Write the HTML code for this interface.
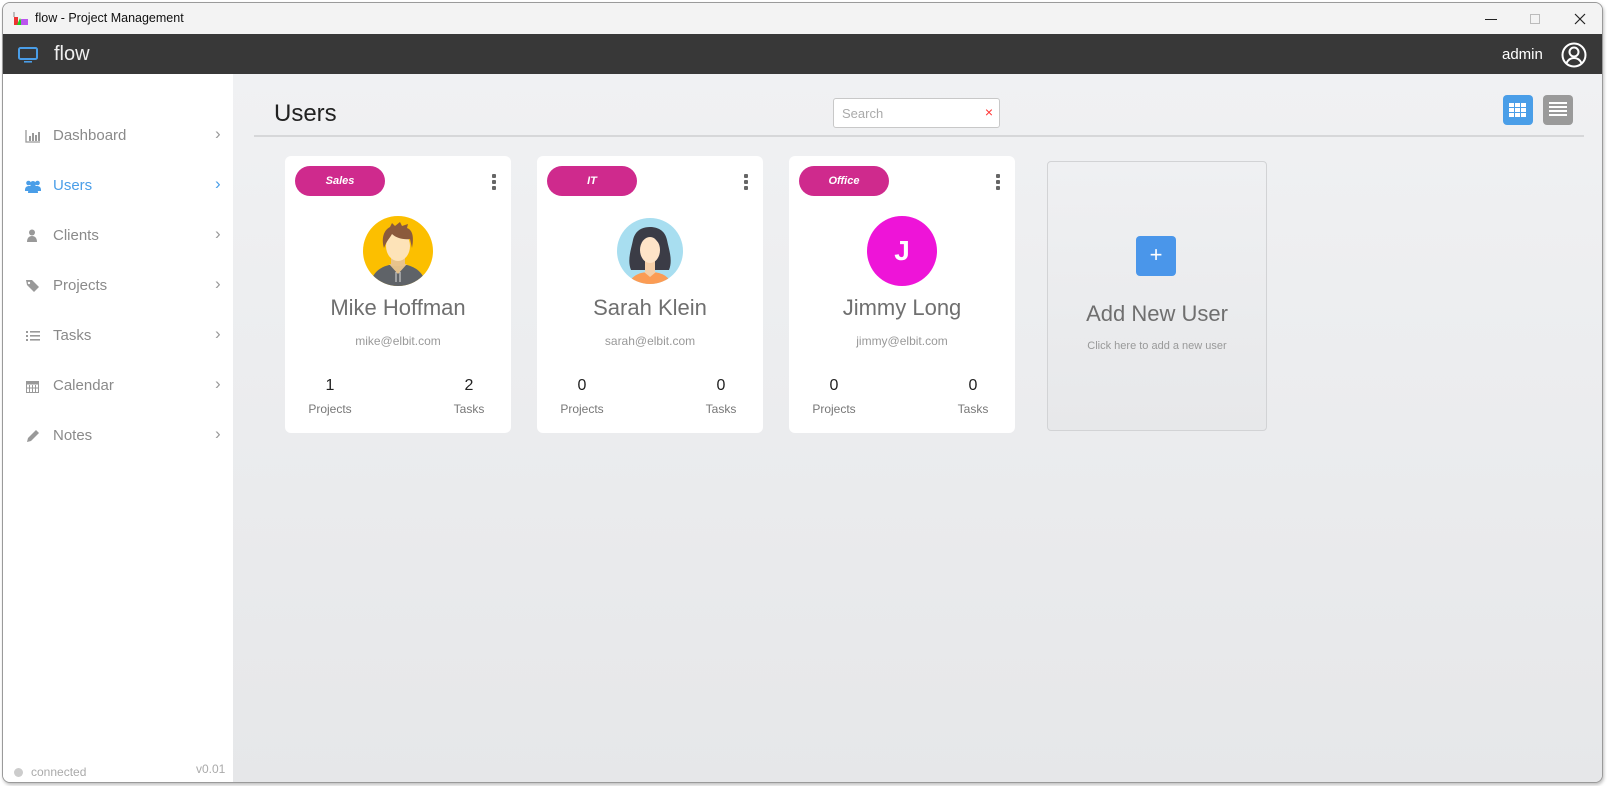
<!DOCTYPE html>
<html><head><meta charset="utf-8"><style>
*{box-sizing:border-box;margin:0;padding:0}
body{width:1607px;height:786px;background:#fff;font-family:"Liberation Sans",sans-serif;position:relative;overflow:hidden}
.win{position:absolute;left:2px;top:2px;width:1601px;height:781px;border:1px solid #9a9a9a;border-radius:8px;overflow:hidden;background:#eceef0;box-shadow:1px 2px 3px rgba(0,0,0,.25)}
.title{position:absolute;left:0;top:0;right:0;height:31px;background:#f3f3f3;font-size:12.5px;color:#111}
.bar{position:absolute;left:0;top:31px;right:0;height:40px;background:#383838;color:#fff}
.side{position:absolute;left:0;top:71px;width:230px;bottom:0;background:#fff}
.main{position:absolute;left:230px;top:71px;right:0;bottom:0;background:linear-gradient(#f0f1f3,#e6e7e9)}
.nav{position:absolute;left:0;width:230px;height:24px;font-size:15px;color:#8a8a8a}
.nav span.t{position:absolute;left:50px;top:2px}
.nav .ic{position:absolute;left:22px;top:4px}
.nav .ch{position:absolute;left:212px;top:-1px;font-size:17px;color:#999}
.card{position:absolute;top:82px;width:226px;height:277px;background:#fff;border-radius:6px}
.pill{position:absolute;left:10px;top:10px;width:90px;height:30px;border-radius:15px;background:#cf2a8d;color:#fff;font-weight:bold;font-style:italic;font-size:11px;text-align:center;line-height:30px}
.dots{position:absolute;left:207px;top:18px;width:4px}
.dots i{display:block;width:4px;height:4px;background:#666;border-radius:1px;margin-bottom:2px}
.av{position:absolute;left:78px;top:60px;width:70px;height:70px;border-radius:50%;overflow:hidden}
.name{position:absolute;left:0;right:0;top:139px;text-align:center;font-size:22px;color:#6f6f6f}
.mail{position:absolute;left:0;right:0;top:178px;text-align:center;font-size:12px;color:#999}
.num{position:absolute;top:221px;font-size:16px;color:#222;text-align:center;width:70px}
.lab{position:absolute;top:246px;font-size:12px;color:#777;text-align:center;width:70px}
</style></head><body>
<div class="win">
<div class="title">
 <svg style="position:absolute;left:10px;top:9px" width="16" height="14"><rect x="1" y="5" width="4" height="8" fill="#e33"/><polygon points="4,13 7,6 10,13" fill="#2c2"/><rect x="8" y="7" width="7" height="6" fill="#b5e"/><line x1="1" y1="0" x2="1" y2="5" stroke="#888"/></svg>
 <span style="position:absolute;left:32px;top:8px">flow - Project Management</span>
 <div style="position:absolute;left:1482px;top:16px;width:12px;height:1px;background:#222"></div>
 <div style="position:absolute;left:1527px;top:11px;width:10px;height:10px;border:1px solid #bbb"></div>
 <svg style="position:absolute;left:1571px;top:10px" width="12" height="12"><path d="M1 1L11 11M11 1L1 11" stroke="#222" stroke-width="1.2"/></svg>
</div>
<div class="bar">
 <svg style="position:absolute;left:15px;top:13px" width="20" height="16"><rect x="1" y="1" width="18" height="11" rx="1.5" fill="none" stroke="#4a9ee8" stroke-width="2"/><rect x="6" y="14" width="8" height="1.6" fill="#4a9ee8"/></svg>
 <span style="position:absolute;left:51px;top:9px;font-size:20px;color:#eee">flow</span>
 <span style="position:absolute;left:1499px;top:12px;font-size:15px">admin</span>
 <svg style="position:absolute;left:1558px;top:8px" width="26" height="26" viewBox="0 0 26 26"><circle cx="13" cy="13" r="11.5" fill="none" stroke="#fff" stroke-width="2"/><circle cx="13" cy="10" r="4.5" fill="none" stroke="#fff" stroke-width="2"/><path d="M5.5 21c2-4 4.5-5 7.5-5s5.5 1 7.5 5" fill="none" stroke="#fff" stroke-width="2"/></svg>
</div>
<div class="side">
 <div class="nav" style="top:51px"><svg class="ic" width="16" height="14"><path d="M1 1V13H15" stroke="#999" fill="none" stroke-width="1.3"/><rect x="4" y="7" width="2" height="5" fill="#999"/><rect x="7" y="4" width="2" height="8" fill="#999"/><rect x="10" y="6" width="2" height="6" fill="#999"/><rect x="13" y="3" width="2" height="9" fill="#999"/></svg><span class="t">Dashboard</span><span class="ch">›</span></div>
 <div class="nav" style="top:101px;color:#4a9ee8"><svg class="ic" width="16" height="14"><circle cx="3.5" cy="4" r="2.3" fill="#4a9ee8"/><circle cx="12.5" cy="4" r="2.3" fill="#4a9ee8"/><circle cx="8" cy="5" r="3" fill="#4a9ee8"/><path d="M0 11c0-3 2-4 4-4h8c2 0 4 1 4 4v1H0z" fill="#4a9ee8"/><path d="M3 14c0-4 2-5 5-5s5 1 5 5z" fill="#4a9ee8"/></svg><span class="t">Users</span><span class="ch" style="color:#4a9ee8">›</span></div>
 <div class="nav" style="top:151px"><svg class="ic" width="16" height="14"><circle cx="7" cy="3.5" r="3" fill="#999"/><path d="M2 13c0-4 2-6 5-6s5 2 5 6z" fill="#999"/></svg><span class="t">Clients</span><span class="ch">›</span></div>
 <div class="nav" style="top:201px"><svg class="ic" width="16" height="14"><path d="M1 1h6l7 7-5 5-7-7z" fill="#999"/><circle cx="4" cy="4" r="1.2" fill="#fff"/></svg><span class="t">Projects</span><span class="ch">›</span></div>
 <div class="nav" style="top:251px"><svg class="ic" width="16" height="14"><g fill="#999"><rect x="1" y="2" width="2" height="2"/><rect x="1" y="6" width="2" height="2"/><rect x="1" y="10" width="2" height="2"/><rect x="5" y="2" width="10" height="1.6"/><rect x="5" y="6" width="10" height="1.6"/><rect x="5" y="10" width="10" height="1.6"/></g></svg><span class="t">Tasks</span><span class="ch">›</span></div>
 <div class="nav" style="top:301px"><svg class="ic" width="16" height="14"><rect x="1.5" y="2.5" width="12" height="11" fill="none" stroke="#999"/><rect x="1.5" y="2.5" width="12" height="3" fill="#999"/><path d="M4.5 6v7M7.5 6v7M10.5 6v7M2 9h11" stroke="#999"/></svg><span class="t">Calendar</span><span class="ch">›</span></div>
 <div class="nav" style="top:351px"><svg class="ic" width="16" height="14"><path d="M2 13l1-4 8-8 3 3-8 8z" fill="#999"/></svg><span class="t">Notes</span><span class="ch">›</span></div>
 <div style="position:absolute;left:11px;top:694px;width:9px;height:9px;border-radius:50%;background:#ccc"></div>
 <span style="position:absolute;left:28px;top:691px;font-size:12px;color:#aaa">connected</span>
 <span style="position:absolute;left:193px;top:688px;font-size:12px;color:#aaa">v0.01</span>
</div>
<div class="main">
 <span style="position:absolute;left:41px;top:26px;font-size:24px;color:#222">Users</span>
 <div style="position:absolute;left:600px;top:24px;width:167px;height:30px;background:#fff;border:1px solid #c8c8c8;border-radius:3px"><span style="position:absolute;left:8px;top:7px;font-size:13px;color:#aaa">Search</span><span style="position:absolute;right:6px;top:5px;font-size:14px;color:#f33">×</span></div>
 <div style="position:absolute;left:21px;top:61px;width:1330px;height:2px;background:#d6d7d9"></div>
 <div style="position:absolute;left:1270px;top:21px;width:30px;height:30px;border-radius:4px;background:#4a9ee8"><svg style="position:absolute;left:6px;top:8px" width="18" height="14"><g fill="#fff"><rect x="0" y="0" width="5" height="4"/><rect x="6" y="0" width="5" height="4"/><rect x="12" y="0" width="5" height="4"/><rect x="0" y="5" width="5" height="4"/><rect x="6" y="5" width="5" height="4"/><rect x="12" y="5" width="5" height="4"/><rect x="0" y="10" width="5" height="4"/><rect x="6" y="10" width="5" height="4"/><rect x="12" y="10" width="5" height="4"/></g></svg></div>
 <div style="position:absolute;left:1310px;top:21px;width:30px;height:30px;border-radius:4px;background:#9a9a9a"><svg style="position:absolute;left:6px;top:7px" width="18" height="16"><g fill="#fff"><rect y="0" width="18" height="2"/><rect y="4" width="18" height="2"/><rect y="8" width="18" height="2"/><rect y="12" width="18" height="2"/></g></svg></div>

 <div class="card" style="left:52px"><div class="pill">Sales</div><div class="dots"><i></i><i></i><i></i></div>
  <div class="av"><svg width="70" height="70" viewBox="0 0 70 70"><rect width="70" height="70" fill="#fcbf00"/><path d="M8 66c2-10 10-15 18-17h18c8 2 16 7 18 17v4H8z" fill="#5f6368"/><path d="M26 48l9 10 9-10" fill="#e3c08a"/><rect x="28" y="38" width="14" height="12" fill="#e8c38c"/><ellipse cx="35" cy="30" rx="12" ry="15" fill="#fde3b8"/><path d="M21 32c-3-10 0-18 6-21l2-4 3 3 5-4 2 4 6-2-1 4c6 2 7 10 5 20l-2-9c-6 1-14-1-18-5-2 4-5 6-8 14z" fill="#8b5a3c"/><path d="M33 56v10M37 56v10" stroke="#ddd" stroke-width="1"/></svg></div>
  <div class="name">Mike Hoffman</div><div class="mail">mike@elbit.com</div>
  <div class="num" style="left:10px">1</div><div class="lab" style="left:10px">Projects</div>
  <div class="num" style="left:149px">2</div><div class="lab" style="left:149px">Tasks</div></div>

 <div class="card" style="left:304px"><div class="pill">IT</div><div class="dots"><i></i><i></i><i></i></div>
  <div class="av" style="width:66px;height:66px;left:80px;top:62px"><svg width="66" height="66" viewBox="0 0 66 66"><rect width="66" height="66" fill="#a8def0"/><path d="M14 52c-4-10 0-20 2-30 2-10 10-13 17-13s15 3 17 13c2 10 6 20 2 30z" fill="#3b3c46"/><path d="M12 66c2-8 10-12 21-12s19 4 21 12z" fill="#fb9c54"/><rect x="28" y="42" width="10" height="12" fill="#f5cfa8"/><path d="M27 54l6 5 6-5" fill="#f5cfa8"/><ellipse cx="33" cy="32" rx="10" ry="13" fill="#fee4c8"/><path d="M22 30c0-10 5-15 12-15 3 6 8 9 10 14 0-9-5-16-11-16s-12 6-11 17z" fill="#3b3c46"/></svg></div>
  <div class="name">Sarah Klein</div><div class="mail">sarah@elbit.com</div>
  <div class="num" style="left:10px">0</div><div class="lab" style="left:10px">Projects</div>
  <div class="num" style="left:149px">0</div><div class="lab" style="left:149px">Tasks</div></div>

 <div class="card" style="left:556px"><div class="pill">Office</div><div class="dots"><i></i><i></i><i></i></div>
  <div class="av" style="background:#ee14d8;color:#fff;font-weight:bold;font-size:28px;text-align:center;line-height:70px">J</div>
  <div class="name">Jimmy Long</div><div class="mail">jimmy@elbit.com</div>
  <div class="num" style="left:10px">0</div><div class="lab" style="left:10px">Projects</div>
  <div class="num" style="left:149px">0</div><div class="lab" style="left:149px">Tasks</div></div>

 <div style="position:absolute;left:814px;top:87px;width:220px;height:270px;border:1px solid #d2d3d5;border-radius:4px;background:linear-gradient(#eff0f2,#e7e8ea)">
  <div style="position:absolute;left:88px;top:74px;width:40px;height:40px;border-radius:4px;background:#4a96ea;color:#fff;font-size:22px;text-align:center;line-height:38px">+</div>
  <div style="position:absolute;left:0;right:0;top:139px;text-align:center;font-size:22px;color:#6f6f6f">Add New User</div>
  <div style="position:absolute;left:0;right:0;top:178px;text-align:center;font-size:11px;color:#999">Click here to add a new user</div>
 </div>
</div>
</div>
</body></html>
